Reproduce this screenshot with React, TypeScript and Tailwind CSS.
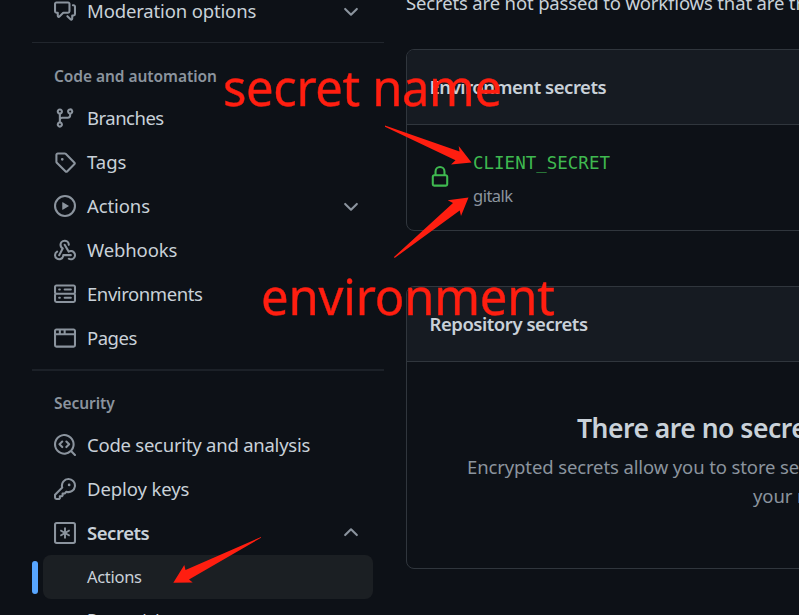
import type { ReactNode } from "react";

const icons = {
  discussion:
    "M1.75 1h8.5c.966 0 1.75.784 1.75 1.75v5.5A1.75 1.75 0 0 1 10.25 10H7.061l-2.574 2.573A1.458 1.458 0 0 1 2 11.543V10h-.25A1.75 1.75 0 0 1 0 8.25v-5.5C0 1.784.784 1 1.75 1ZM1.5 2.75v5.5c0 .138.112.25.25.25h1a.75.75 0 0 1 .75.75v2.19l2.72-2.72a.749.749 0 0 1 .53-.22h3.5a.25.25 0 0 0 .25-.25v-5.5a.25.25 0 0 0-.25-.25h-8.5a.25.25 0 0 0-.25.25Zm13 2a.25.25 0 0 0-.25-.25h-.5a.75.75 0 0 1 0-1.5h.5c.966 0 1.75.784 1.75 1.75v5.5A1.75 1.75 0 0 1 14.25 12H14v1.543a1.458 1.458 0 0 1-2.487 1.03L9.22 12.28a.749.749 0 0 1 .326-1.275.749.749 0 0 1 .734.215l2.22 2.22v-2.19a.75.75 0 0 1 .75-.75h1a.25.25 0 0 0 .25-.25Z",
  branch:
    "M9.5 3.25a2.25 2.25 0 1 1 3 2.122V6A2.5 2.5 0 0 1 10 8.5H6a1 1 0 0 0-1 1v1.128a2.251 2.251 0 1 1-1.5 0V5.372a2.25 2.25 0 1 1 1.5 0v1.836A2.493 2.493 0 0 1 6 7h4a1 1 0 0 0 1-1v-.628A2.25 2.25 0 0 1 9.5 3.25Zm-6 0a.75.75 0 1 0 1.5 0 .75.75 0 0 0-1.5 0Zm8.25-.75a.75.75 0 1 0 0 1.5.75.75 0 0 0 0-1.5ZM4.25 12a.75.75 0 1 0 0 1.5.75.75 0 0 0 0-1.5Z",
  tag: "M1 7.775V2.75C1 1.784 1.784 1 2.75 1h5.025c.464 0 .91.184 1.238.513l6.25 6.25a1.75 1.75 0 0 1 0 2.474l-5.026 5.026a1.75 1.75 0 0 1-2.474 0l-6.25-6.25A1.752 1.752 0 0 1 1 7.775Zm1.5 0c0 .066.026.13.073.177l6.25 6.25a.25.25 0 0 0 .354 0l5.025-5.025a.25.25 0 0 0 0-.354l-6.25-6.25a.25.25 0 0 0-.177-.073H2.75a.25.25 0 0 0-.25.25ZM6 5a1 1 0 1 1 0 2 1 1 0 0 1 0-2Z",
  play: "M8 0a8 8 0 1 1 0 16A8 8 0 0 1 8 0ZM1.5 8a6.5 6.5 0 1 0 13 0 6.5 6.5 0 0 0-13 0Zm4.879-2.773 4.264 2.559a.25.25 0 0 1 0 .428l-4.264 2.559A.25.25 0 0 1 6 10.559V5.442a.25.25 0 0 1 .379-.215Z",
  webhook:
    "M5.5 4.25a2.25 2.25 0 0 1 4.5 0 .75.75 0 0 0 1.5 0 3.75 3.75 0 1 0-6.14 2.889l-2.272 4.258a.75.75 0 0 0 1.324.706L7 7.25a.75.75 0 0 0-.309-1.015A2.25 2.25 0 0 1 5.5 4.25Z M7.364 3.607a.75.75 0 0 1 1.03.257l2.608 4.349a3.75 3.75 0 1 1-.628 6.785.75.75 0 0 1 .752-1.299 2.25 2.25 0 1 0-.033-3.88.75.75 0 0 1-1.03-.256L7.107 4.636a.75.75 0 0 1 .257-1.03Z M2.9 8.776A.75.75 0 0 1 2.625 9.8 2.25 2.25 0 1 0 6 11.75a.75.75 0 0 1 .75-.751h5.5a.75.75 0 0 1 0 1.5H7.425a3.751 3.751 0 1 1-5.55-3.998.75.75 0 0 1 1.024.274Z",
  server:
    "M1.75 1h12.5c.966 0 1.75.784 1.75 1.75v4c0 .372-.116.717-.314 1 .198.283.314.628.314 1v4a1.75 1.75 0 0 1-1.75 1.75H1.75A1.75 1.75 0 0 1 0 12.75v-4c0-.358.109-.707.314-1a1.739 1.739 0 0 1-.314-1v-4C0 1.784.784 1 1.75 1ZM1.5 2.75v4c0 .138.112.25.25.25h12.5a.25.25 0 0 0 .25-.25v-4a.25.25 0 0 0-.25-.25H1.75a.25.25 0 0 0-.25.25Zm.25 5.75a.25.25 0 0 0-.25.25v4c0 .138.112.25.25.25h12.5a.25.25 0 0 0 .25-.25v-4a.25.25 0 0 0-.25-.25ZM7 4.75A.75.75 0 0 1 7.75 4h4.5a.75.75 0 0 1 0 1.5h-4.5A.75.75 0 0 1 7 4.75ZM7.75 10h4.5a.75.75 0 0 1 0 1.5h-4.5a.75.75 0 0 1 0-1.5ZM3 4.75A.75.75 0 0 1 3.75 4h.5a.75.75 0 0 1 0 1.5h-.5A.75.75 0 0 1 3 4.75ZM3.75 10h.5a.75.75 0 0 1 0 1.5h-.5a.75.75 0 0 1 0-1.5Z",
  browser:
    "M0 2.75C0 1.784.784 1 1.75 1h12.5c.966 0 1.75.784 1.75 1.75v10.5A1.75 1.75 0 0 1 14.25 15H1.75A1.75 1.75 0 0 1 0 13.25ZM14.5 6h-13v7.25c0 .138.112.25.25.25h12.5a.25.25 0 0 0 .25-.25Zm-6-3.5v2h6V2.75a.25.25 0 0 0-.25-.25ZM5 2.5v2h2v-2Zm-3.25 0a.25.25 0 0 0-.25.25V4.5h2v-2Z",
  codescan:
    "M8.47 4.97a.75.75 0 0 0 0 1.06L9.94 7.5 8.47 8.97a.75.75 0 1 0 1.06 1.06l2-2a.75.75 0 0 0 0-1.06l-2-2a.75.75 0 0 0-1.06 0ZM6.53 6.03a.75.75 0 0 0-1.06-1.06l-2 2a.75.75 0 0 0 0 1.06l2 2a.75.75 0 1 0 1.06-1.06L5.06 7.5l1.47-1.47Z M12.246 13.307a7.501 7.501 0 1 1 1.06-1.06l2.474 2.473a.749.749 0 1 1-1.06 1.06ZM1.5 7.5a6.002 6.002 0 0 0 3.608 5.504 6.002 6.002 0 0 0 6.486-1.117.748.748 0 0 1 .292-.293A6 6 0 1 0 1.5 7.5Z",
  key: "M10.5 0a5.499 5.499 0 1 1-1.288 10.848l-.932.932a.749.749 0 0 1-.53.22H7v.75a.749.749 0 0 1-.22.53l-.5.5a.749.749 0 0 1-.53.22H5v.75a.749.749 0 0 1-.22.53l-.5.5a.749.749 0 0 1-.53.22h-2A1.75 1.75 0 0 1 0 14.25v-2c0-.199.079-.389.22-.53l4.932-4.932A5.5 5.5 0 0 1 10.5 0Zm-4 5.5c-.001.431.069.86.205 1.269a.75.75 0 0 1-.181.768L1.5 12.56v1.69c0 .138.112.25.25.25h1.69l.06-.06v-1.19a.75.75 0 0 1 .75-.75h1.19l.06-.06v-1.19a.75.75 0 0 1 .75-.75h1.19l1.023-1.025a.75.75 0 0 1 .768-.18A4 4 0 1 0 6.5 5.5ZM11 6a1 1 0 1 1 0-2 1 1 0 0 1 0 2Z",
  lock: "M4 4a4 4 0 0 1 8 0v2h.25c.966 0 1.75.784 1.75 1.75v5.5A1.75 1.75 0 0 1 12.25 15h-8.5A1.75 1.75 0 0 1 2 13.25v-5.5C2 6.784 2.784 6 3.75 6H4Zm8.25 3.5h-8.5a.25.25 0 0 0-.25.25v5.5c0 .138.112.25.25.25h8.5a.25.25 0 0 0 .25-.25v-5.5a.25.25 0 0 0-.25-.25ZM10.5 6V4a2.5 2.5 0 1 0-5 0v2Z",
  chevron:
    "M12.78 5.22a.749.749 0 0 1 0 1.06l-4.25 4.25a.749.749 0 0 1-1.06 0L3.22 6.28a.749.749 0 1 1 1.06-1.06L8 8.939l3.72-3.719a.749.749 0 0 1 1.06 0Z",
};

function Icon({ name, className = "" }: { name: keyof typeof icons; className?: string }) {
  return (
    <svg viewBox="0 0 16 16" fill="currentColor" className={`size-[22px] shrink-0 ${className}`}>
      <path d={icons[name]} fillRule={name === "webhook" ? "nonzero" : "evenodd"} />
    </svg>
  );
}

function AsteriskBox() {
  return (
    <svg viewBox="0 0 16 16" fill="none" stroke="currentColor" strokeWidth="1.5" className="size-[22px] shrink-0">
      <rect x=".75" y=".75" width="14.5" height="14.5" rx="1.2" />
      <path d="M8 4v8M4.6 6l6.8 4M11.4 6l-6.8 4" strokeWidth="1.4" />
    </svg>
  );
}

type ItemProps = { icon: ReactNode; label: string; text: string; chevron?: "down" | "up" };

function Item({ icon, label, text, chevron }: ItemProps) {
  return (
    <li className="flex h-11 items-center pr-[22px] pl-[22px] text-[#8b949e]">
      {icon}
      <span className={`ml-[11px] flex-1 whitespace-nowrap text-[18.5px] leading-7 text-[#c9d1d9] ${text}`}>{label}</span>
      {chevron && <Icon name="chevron" className={chevron === "up" ? "mb-0.5 rotate-180" : "mt-px"} />}
    </li>
  );
}

function Heading({ children, className }: { children: ReactNode; className: string }) {
  return (
    <h3 className={`pl-[22px] text-[15.5px] leading-6 font-semibold tracking-[-0.05px] text-[#8b949e] ${className}`}>
      {children}
    </h3>
  );
}

function Sidebar() {
  return (
    <nav className="-mt-[11px] ml-8 w-[352px] shrink-0">
      <ul>
        <Item icon={<Icon name="discussion" />} label="Moderation options" text="tracking-[-0.15px]" chevron="down" />
      </ul>
      <hr className="mt-[9px] border-[#21262d]" />
      <Heading className="mt-[21px] mb-2">Code and automation</Heading>
      <ul>
        <Item icon={<Icon name="branch" />} label="Branches" text="tracking-[-0.5px]" />
        <Item icon={<Icon name="tag" />} label="Tags" text="tracking-normal" />
        <Item icon={<Icon name="play" />} label="Actions" text="tracking-[-0.1px]" chevron="down" />
        <Item icon={<Icon name="webhook" />} label="Webhooks" text="tracking-[-0.12px]" />
        <Item icon={<Icon name="server" />} label="Environments" text="tracking-[-0.42px]" />
        <Item icon={<Icon name="browser" />} label="Pages" text="tracking-[-0.5px]" />
      </ul>
      <hr className="mt-[9px] border-t-2 border-[#1c2128]" />
      <Heading className="mt-5 mb-2">Security</Heading>
      <ul>
        <Item icon={<Icon name="codescan" />} label="Code security and analysis" text="tracking-[-0.24px]" />
        <Item icon={<Icon name="key" />} label="Deploy keys" text="tracking-[-0.1px]" />
        <Item icon={<AsteriskBox />} label="Secrets" text="font-semibold tracking-[-0.45px]" chevron="up" />
      </ul>
      <div className="flex h-11 items-center">
        <span className="h-[33px] w-1.5 rounded-full bg-[#58a6ff]" />
        <span className="ml-[5px] flex h-11 w-[330px] items-center rounded-lg bg-[#1b1f23] pl-11 text-[16.5px] tracking-[-0.3px] text-[#c9d1d9]">
          Actions
        </span>
      </div>
      <div className="flex h-[42px] items-center pl-[55px] text-[16.5px] tracking-[-0.3px] text-[#c9d1d9]">Dependabot</div>
    </nav>
  );
}

function CardHeader({ children }: { children: ReactNode }) {
  return (
    <h3 className="flex h-[75px] items-center border-b border-[#30363d] bg-[#161b22] pl-[22.5px] text-[18.5px] font-semibold tracking-[-0.46px] text-[#c9d1d9]">
      {children}
    </h3>
  );
}

function Content() {
  return (
    <main className="ml-[22px] w-[1000px] shrink-0 whitespace-nowrap">
      <p className="-mt-[11px] text-[18.5px] leading-7 tracking-[-0.15px] text-[#c9d1d9]">
        Secrets are not passed to workflows that are triggered by a pull request from a fork.
      </p>
      <section className="mt-8 h-[182px] overflow-hidden rounded-lg border border-[#30363d]">
        <CardHeader>Environment secrets</CardHeader>
        <div className="flex items-center pt-[22px] pl-[22px]">
          <Icon name="lock" className="mb-1 text-[#3fb950]" />
          <div className="ml-[22px]">
            <div className="pt-px font-['DejaVu_Sans_Mono',monospace] text-[17.5px] leading-[30px] text-[#3fb950]">
              CLIENT_SECRET
            </div>
            <div className="mt-[3px] text-[16.5px] leading-[30px] tracking-[-0.5px] text-[#8b949e]">gitalk</div>
          </div>
        </div>
      </section>
      <section className="mt-[55px] h-[283px] overflow-hidden rounded-lg border border-[#30363d]">
        <CardHeader>Repository secrets</CardHeader>
        <h2 className="mt-[46px] pl-[170px] text-[26.5px] leading-10 font-semibold tracking-[-0.5px] text-[#c9d1d9]">
          There are no secrets for this repository.
        </h2>
        <p className="mt-1 pl-[60px] text-[18.5px] leading-[29px] tracking-[-0.12px] text-[#8b949e]">
          Encrypted secrets allow you to store sensitive information, such as access tokens, in
        </p>
        <p className="pl-[346px] text-[18.5px] leading-[29px] tracking-[-0.12px] text-[#8b949e]">
          your repository environments.
        </p>
      </section>
    </main>
  );
}

/* Red marker notes drawn over the settings page */
function Annotations() {
  return (
    <div className="pointer-events-none absolute inset-0 text-[#ff1e10]">
      <svg viewBox="0 0 799 615" className="absolute inset-0 size-full" fill="currentColor">
        <path d="M385 125.5 459.5 151.500 458.700 146 471.500 162.500 451 164.500 455.500 160.200 385 126.800Z" />
        <path d="M394 257 453 203 447.700 200.300 468.500 197.600 461 216 459.700 210.500 394.600 258Z" />
        <path d="M261 537 185.500 570 184.300 565 173.300 582.700 192.700 582.400 189 579.600 261 537.800Z" />
      </svg>
      <span className="absolute top-[53px] left-[223px] text-[49px] leading-[68px] tracking-[-0.4px] whitespace-nowrap [-webkit-text-stroke:0.4px]">
        secret name
      </span>
      <span className="absolute top-[262px] left-[261px] text-[49px] leading-[68px] tracking-[-0.2px] whitespace-nowrap [-webkit-text-stroke:0.4px]">
        environment
      </span>
    </div>
  );
}

export default function App() {
  return (
    <div className="relative flex h-[615px] w-[799px] overflow-hidden bg-[#0d1117] font-['Noto_Sans',sans-serif]">
      <Sidebar />
      <Content />
      <Annotations />
    </div>
  );
}
